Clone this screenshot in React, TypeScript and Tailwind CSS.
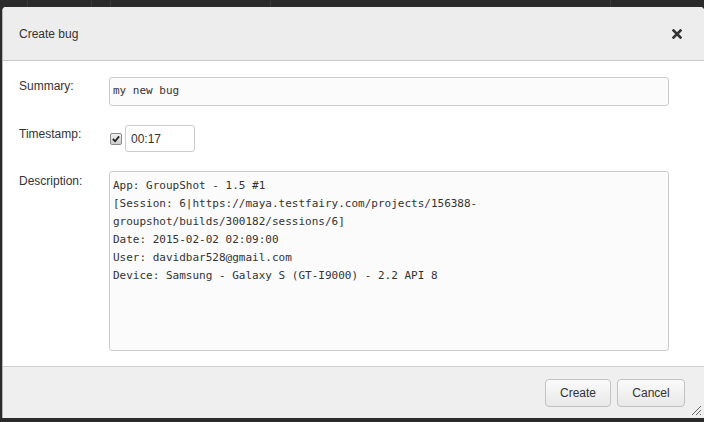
import React from "react";

const sans = { fontFamily: '"Liberation Sans", Arial, sans-serif' };
const mono = { fontFamily: '"DejaVu Sans Mono", "Liberation Mono", monospace' };

export default function App() {
  const desc = [
    "App: GroupShot - 1.5 #1",
    "[Session: 6|https://maya.testfairy.com/projects/156388-",
    "groupshot/builds/300182/sessions/6]",
    "Date: 2015-02-02 02:09:00",
    "User: davidbar528@gmail.com",
    "Device: Samsung - Galaxy S (GT-I9000) - 2.2 API 8",
  ];
  return (
    <div className="w-[704px] h-[422px] bg-[#2b2b2b] overflow-hidden flex flex-col" style={sans}>
      <div className="h-[7px] flex shrink-0">
        <div className="w-[28px] border-r border-[#3a3a3a]" />
        <div className="w-[64px] border-r border-[#3a3a3a]" />
        <div className="w-[19px] border-r border-[#3a3a3a]" />
        <div className="w-[160px] border-r border-[#3a3a3a]" />
        <div className="w-[340px] border-r border-[#3a3a3a]" />
      </div>
      <div className="ml-[2px] w-[702px] h-[411px] shrink-0 bg-white rounded-t-[4px] border-l border-[#b5b5b5] flex flex-col overflow-hidden">
        <div className="h-[54px] shrink-0 bg-[#ededed] border-b border-[#c8c8c8] flex items-center justify-between pl-[16px] pr-[22px]">
          <span className="text-[12px] text-[#333]">Create bug</span>
          <svg width="10" height="10" viewBox="0 0 10 10">
            <path d="M1.5 1.5 L8.5 8.5 M8.5 1.5 L1.5 8.5" stroke="#333" strokeWidth="2.6" strokeLinecap="square" />
          </svg>
        </div>
        <div className="flex-1 pl-[16px] pr-[35px] pt-[16px] text-[12px] text-[#333] flex flex-col gap-[19px]">
          <div className="flex">
            <div className="w-[90px] pt-[2px] leading-[14px]">Summary:</div>
            <div className="flex-1 h-[29px] border border-[#ccc] rounded-[3px] bg-[#fbfbfb] flex items-center pl-[3px] text-[11px] text-[#333]" style={mono}>
              my new bug
            </div>
          </div>
          <div className="flex">
            <div className="w-[90px] pt-[2px] leading-[14px]">Timestamp:</div>
            <div className="flex items-center gap-[3px]">
              <span className="w-[12px] h-[12px] ml-[1px] border border-[#8a8a8a] rounded-[2px] bg-gradient-to-b from-[#f0f0f0] to-[#cfcfcf] flex items-center justify-center">
                <svg width="8" height="8" viewBox="0 0 9 9">
                  <path d="M1 4.5 L3.5 7 L8 1.5" fill="none" stroke="#222" strokeWidth="2" />
                </svg>
              </span>
              <div className="w-[70px] h-[27px] border border-[#ccc] rounded-[3px] bg-white flex items-center pl-[5px] text-[12px]">
                00:17
              </div>
            </div>
          </div>
          <div className="flex">
            <div className="w-[90px] pt-[3px] leading-[14px]">Description:</div>
            <div className="flex-1 h-[180px] border border-[#ccc] rounded-[3px] bg-[#fbfbfb] pl-[3px] pt-[5px] text-[11px] leading-[18px] text-[#333]" style={mono}>
              {desc.map((l, i) => (
                <div key={i} className="whitespace-pre">{l}</div>
              ))}
            </div>
          </div>
        </div>
        <div className="h-[52px] shrink-0 bg-[#f0eff0] border-t border-[#cfcfcf] flex items-center justify-end gap-[6px] pr-[19px] relative">
          <button className="w-[66px] h-[28px] border border-[#c2c2c2] rounded-[4px] bg-gradient-to-b from-[#fbfbfb] to-[#e8e8e8] text-[12px] text-[#333]">
            Create
          </button>
          <button className="w-[68px] h-[28px] border border-[#c2c2c2] rounded-[4px] bg-gradient-to-b from-[#fbfbfb] to-[#e8e8e8] text-[12px] text-[#333]">
            Cancel
          </button>
          <svg className="absolute right-[2px] bottom-[2px]" width="12" height="12" viewBox="0 0 12 12">
            <path d="M11 2 L2 11 M11 6 L6 11 M11 10 L10 11" stroke="#666" strokeWidth="1" />
          </svg>
        </div>
      </div>
    </div>
  );
}
